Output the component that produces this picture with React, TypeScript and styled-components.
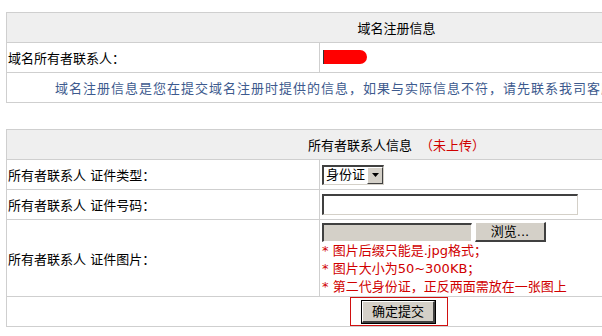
import React from 'react'
import styled, { createGlobalStyle } from 'styled-components'

const GlobalStyle = createGlobalStyle`
html, body {
  margin: 0;
  padding: 0;
  background: #ffffff;
  overflow: hidden;
}
body {
  font-family: "DejaVu Sans", "Noto Sans CJK SC", sans-serif;
  font-size: 13px;
  color: #000000;
}
`;

const Page = styled.div`
padding: 12px 0 0 6px;
width: 800px;
`;

const Panel = styled.div<{ $gap?: number }>`
width: 780px;
margin-top: ${p => p.$gap || 0}px;
border-top: 1px solid #cfcfcf;
border-left: 1px solid #cfcfcf;
`;

const Row = styled.div<{ $split?: boolean }>`
display: grid;
grid-template-columns: ${p => (p.$split ? '313px 1fr' : '1fr')};
`;

const Cell = styled.div<{ $height?: number }>`
box-sizing: border-box;
min-height: ${p => p.$height || 30}px;
border-right: 1px solid #cfcfcf;
border-bottom: 1px solid #cfcfcf;
display: flex;
align-items: center;
white-space: nowrap;
`;

const HeadCell = styled(Cell)`
background: #efefef;
justify-content: center;
`;

const LabelCell = styled(Cell)`
padding-left: 1px;
`;

const ValueCell = styled(Cell)`
padding-left: 2px;
`;

const NoteCell = styled(Cell)`
padding-left: 48px;
color: #3d5a8e;
letter-spacing: 1px;
`;

const Red = styled.span`
color: #d00000;
margin-left: 8px;
`;

const Redacted = styled.span`
display: inline-block;
width: 43px;
height: 14px;
margin-left: 1px;
border-radius: 7px;
background: #ff0000;
border-left: 1px solid #333;
border-top-left-radius: 0;
border-bottom-left-radius: 0;
position: relative;
top: -1px;
`;

const SelectBox = styled.div`
box-sizing: border-box;
display: inline-flex;
align-items: center;
width: 62px;
height: 20px;
border-top: 2px solid #404040;
border-left: 2px solid #404040;
border-bottom: 1px solid #d4d0c8;
border-right: 1px solid #d4d0c8;
background: #fff;
padding-left: 2px;
`;

const SelectText = styled.span`
flex: 1;
line-height: 16px;
`;

const ArrowBtn = styled.span`
box-sizing: border-box;
width: 16px;
height: 17px;
background: #d4d0c8;
border-top: 1px solid #ffffff;
border-left: 1px solid #ffffff;
border-bottom: 1px solid #404040;
border-right: 1px solid #404040;
display: flex;
align-items: center;
justify-content: center;
`;

const TextInput = styled.input`
box-sizing: border-box;
width: 256px;
height: 21px;
margin: 3px 0 4px;
border-top: 2px solid #404040;
border-left: 2px solid #404040;
border-bottom: 1px solid #d4d0c8;
border-right: 1px solid #d4d0c8;
outline: none;
padding: 0 2px;
font: inherit;
`;

const UploadBlock = styled.div`
display: flex;
flex-direction: column;
padding-top: 2px;
`;

const FileLine = styled.div`
display: flex;
align-items: center;
gap: 3px;
`;

const FileField = styled.div`
box-sizing: border-box;
width: 150px;
height: 19px;
background: #d4d0c8;
border-top: 2px solid #404040;
border-left: 2px solid #404040;
border-bottom: 1px solid #ffffff;
border-right: 1px solid #ffffff;
`;

const WinButton = styled.button<{ $w: number; $h: number }>`
box-sizing: border-box;
width: ${p => p.$w}px;
height: ${p => p.$h}px;
padding: 0;
background: #d4d0c8;
font: inherit;
color: #000;
border-top: 1px solid #ffffff;
border-left: 1px solid #ffffff;
border-bottom: 2px solid #404040;
border-right: 2px solid #404040;
line-height: 1;
`;

const SubmitButton = styled(WinButton)`
outline: 1px solid #000000;
`;

const Hint = styled.div`
color: #d00000;
line-height: 18px;
`;

const SubmitCell = styled(Cell)`
justify-content: center;
`;

const SubmitFrame = styled.div`
box-sizing: border-box;
width: 98px;
height: 29px;
margin-left: 4px;
border: 1px solid #d01010;
display: flex;
align-items: center;
justify-content: center;
`;

const hints = [
  '* 图片后缀只能是.jpg格式；',
  '* 图片大小为50~300KB；',
  '* 第二代身份证，正反两面需放在一张图上',
]

const App = () => {
  return (
    <Page>
      <GlobalStyle />
      <Panel>
        <Row>
          <HeadCell>域名注册信息</HeadCell>
        </Row>
        <Row $split>
          <LabelCell>域名所有者联系人：</LabelCell>
          <ValueCell>
            <Redacted />
          </ValueCell>
        </Row>
        <Row>
          <NoteCell>域名注册信息是您在提交域名注册时提供的信息，如果与实际信息不符，请先联系我司客服修改。</NoteCell>
        </Row>
      </Panel>

      <Panel $gap={26}>
        <Row>
          <HeadCell>
            所有者联系人信息 <Red>（未上传）</Red>
          </HeadCell>
        </Row>
        <Row $split>
          <LabelCell>所有者联系人 证件类型：</LabelCell>
          <ValueCell>
            <SelectBox>
              <SelectText>身份证</SelectText>
              <ArrowBtn>
                <svg width="7" height="4" viewBox="0 0 7 4">
                  <path d="M0 0h7L3.5 4z" fill="#000" />
                </svg>
              </ArrowBtn>
            </SelectBox>
          </ValueCell>
        </Row>
        <Row $split>
          <LabelCell>所有者联系人 证件号码：</LabelCell>
          <ValueCell>
            <TextInput type="text" />
          </ValueCell>
        </Row>
        <Row $split>
          <LabelCell $height={77}>所有者联系人 证件图片：</LabelCell>
          <ValueCell $height={77}>
            <UploadBlock>
              <FileLine>
                <FileField />
                <WinButton $w={71} $h={20}>浏览...</WinButton>
              </FileLine>
              {hints.map(h => (
                <Hint key={h}>{h}</Hint>
              ))}
            </UploadBlock>
          </ValueCell>
        </Row>
        <Row>
          <SubmitCell>
            <SubmitFrame>
              <SubmitButton $w={73} $h={22}>确定提交</SubmitButton>
            </SubmitFrame>
          </SubmitCell>
        </Row>
      </Panel>
    </Page>
  )
}

export default App
